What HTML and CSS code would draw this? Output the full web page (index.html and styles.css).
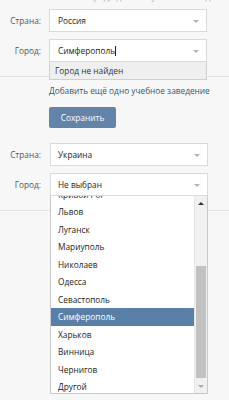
FILE: index.html
```html
<!DOCTYPE html>
<html lang="ru">
<head>
<meta charset="utf-8">
<link rel="stylesheet" href="styles.css">
</head>
<body>
<div class="sec sec1">
  <div class="frag-top"><span>Укажите город, где ваше учебное заведение</span></div>
  <div class="row r1">
    <div class="label">Страна:</div>
    <div class="field"><span class="val">Россия</span><span class="arrow"></span></div>
  </div>
  <div class="row r2">
    <div class="label">Город:</div>
    <div class="field focus"><span class="val">Симферополь<span class="caret"></span></span><span class="arrow"></span></div>
  </div>
  <div class="notfound">Город не найден</div>
  <div class="sep s1"></div>
  <div class="link">Добавить ещё одно учебное заведение</div>
  <div class="btn">Сохранить</div>
</div>
<div class="sec sec2">
  <div class="frag-mid"><span>Добавить ещё одно учебное заведение</span></div>
  <div class="row r3">
    <div class="label">Страна:</div>
    <div class="field f2"><span class="val">Украина</span><span class="arrow"></span></div>
  </div>
  <div class="row r4">
    <div class="label">Город:</div>
    <div class="field f2"><span class="val">Не выбран</span><span class="arrow"></span></div>
  </div>
  <div class="sep s2"></div>
  <div class="list">
    <div class="items">
      <div class="item">Кривой Рог</div>
      <div class="item">Львов</div>
      <div class="item">Луганск</div>
      <div class="item">Мариуполь</div>
      <div class="item">Николаев</div>
      <div class="item">Одесса</div>
      <div class="item">Севастополь</div>
      <div class="item sel">Симферополь</div>
      <div class="item">Харьков</div>
      <div class="item">Винница</div>
      <div class="item">Чернигов</div>
      <div class="item">Другой</div>
    </div>
    <div class="scroll">
      <div class="sb-btn"><span class="up"></span></div>
      <div class="sb-track"><div class="thumb"></div></div>
      <div class="sb-btn"><span class="down"></span></div>
    </div>
  </div>
</div>
</body>
</html>
```
FILE: styles.css
```css
html, body {
  margin: 0;
  padding: 0;
}
body {
  width: 229px;
  height: 400px;
  overflow: hidden;
  background: #f7f7f7;
  font-family: "Open Sans", "Liberation Sans", sans-serif;
  font-size: 8.3px;
  color: #222;
}
.sec {
  position: relative;
}
.sec1 {
  height: 131px;
}
.frag-top {
  height: 3px;
  overflow: hidden;
  padding-left: 49px;
  color: #9aa7b6;
  white-space: nowrap;
}
.frag-top span {
  display: block;
  margin-top: -9px;
  line-height: 12px;
}
.row {
  display: flex;
  align-items: center;
  height: 23px;
}
.r1 { margin-top: 6px; }
.r2 { margin-top: 7px; }
.label {
  width: 41px;
  text-align: right;
  color: #555;
}
.field {
  margin-left: 8px;
  width: 158px;
  height: 23px;
  box-sizing: border-box;
  border: 1px solid #dadada;
  background: #fff;
  display: flex;
  align-items: center;
  padding: 0 7px 0 8px;
}
.field.f2 {
  margin-left: 9px;
  padding-left: 7px;
}
.val {
  flex: 1;
  display: flex;
  align-items: center;
}
.caret {
  display: inline-block;
  width: 1px;
  height: 10px;
  background: #222;
}
.arrow {
  width: 0;
  height: 0;
  border-left: 3.5px solid transparent;
  border-right: 3.5px solid transparent;
  border-top: 3.5px solid #b3b3b3;
  margin-top: 1px;
}
.notfound {
  position: absolute;
  left: 49px;
  top: 62px;
  width: 158px;
  height: 18px;
  box-sizing: border-box;
  border: 1px solid #cfcfcf;
  border-top: none;
  background: #efefef;
  padding-left: 5px;
  line-height: 17px;
  color: #333;
  z-index: 2;
}
.sep {
  height: 1px;
  background: #e3e3e3;
}
.s1 { margin-top: 14px; }
.link {
  margin: 7px 0 0 49px;
  line-height: 14px;
  color: #2b587a;
  white-space: nowrap;
}
.btn {
  margin: 9px 0 0 49px;
  width: 67px;
  height: 21px;
  border-radius: 2px;
  background: #6383a8;
  color: #fff;
  text-align: center;
  line-height: 21px;
}
.frag-mid {
  height: 4px;
  overflow: hidden;
  padding-left: 49px;
  color: #b8c4d2;
  white-space: nowrap;
}
.frag-mid span {
  display: block;
  margin-top: 2px;
  line-height: 12px;
}
.r3 { margin-top: 8px; }
.r4 { margin-top: 7px; }
.s2 { margin-top: 14px; }
.sec2 {
  height: 269px;
}
.list {
  position: absolute;
  left: 50px;
  top: 65px;
  width: 158px;
  height: 198px;
  box-sizing: border-box;
  border: 1px solid #c9c9c9;
  border-top: none;
  background: #fff;
  display: flex;
  overflow: hidden;
  z-index: 2;
}
.items {
  flex: 1;
  margin-top: -10.5px;
}
.item {
  height: 17.5px;
  line-height: 17.5px;
  padding-left: 7px;
  white-space: nowrap;
}
.item.sel {
  background: #5a7fa7;
  color: #fff;
}
.scroll {
  width: 12px;
  background: #f0f0f0;
  display: flex;
  flex-direction: column;
  border-left: 1px solid #e6e6e6;
}
.sb-btn {
  height: 14px;
  display: flex;
  align-items: center;
  justify-content: center;
}
.up {
  width: 0;
  height: 0;
  border-left: 3px solid transparent;
  border-right: 3px solid transparent;
  border-bottom: 3px solid #333;
}
.down {
  width: 0;
  height: 0;
  border-left: 3px solid transparent;
  border-right: 3px solid transparent;
  border-top: 3px solid #aaa;
}
.sb-track {
  flex: 1;
  display: flex;
  flex-direction: column;
  justify-content: flex-end;
  padding: 0 1px;
}
.thumb {
  height: 112px;
  margin-bottom: 1px;
  background: #c1c1c1;
}
```
